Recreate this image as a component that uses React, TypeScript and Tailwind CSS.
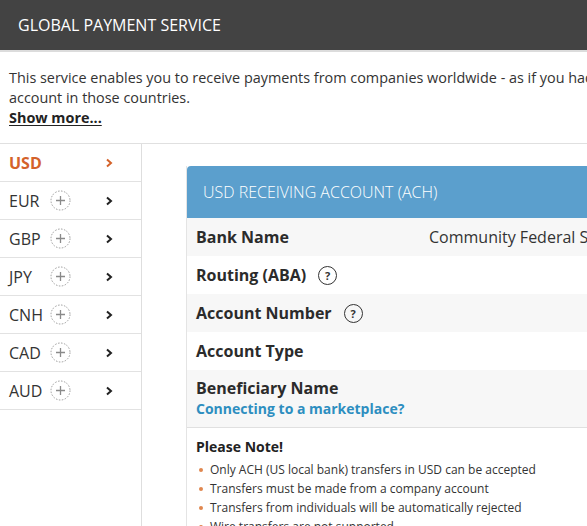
import React from 'react';

const currencies = [
    { code: 'USD', active: true },
    { code: 'EUR' },
    { code: 'GBP' },
    { code: 'JPY' },
    { code: 'CNH' },
    { code: 'CAD' },
    { code: 'AUD' },
];

function Chevron({ color }: { color: string }) {
    return (
        <svg width="8" height="10" viewBox="0 0 8 10" className="shrink-0">
            <path d="M2 1.5 L6 5 L2 8.5" fill="none" stroke={color} strokeWidth="2" />
        </svg>
    );
}

function PlusCircle() {
    return (
        <svg width="21" height="21" viewBox="0 0 21 21" className="shrink-0">
            <circle cx="10.5" cy="10.5" r="9.5" fill="none" stroke="#9a9a9a" strokeWidth="1" strokeDasharray="1.5 1.5" />
            <path d="M10.5 6 V15 M6 10.5 H15" stroke="#8a8a8a" strokeWidth="1.3" />
        </svg>
    );
}

function Help() {
    return (
        <span className="ml-3 inline-flex h-[19px] w-[19px] items-center justify-center rounded-full border-[1.5px] border-[#333] text-[11px] font-bold leading-none text-[#333]">
            ?
        </span>
    );
}

const rows = [
    { label: 'Bank Name', value: 'Community Federal Savings Bank', shade: true },
    { label: 'Routing (ABA)', help: true },
    { label: 'Account Number', help: true, shade: true },
    { label: 'Account Type' },
];

const notes = [
    'Only ACH (US local bank) transfers in USD can be accepted',
    'Transfers must be made from a company account',
    'Transfers from individuals will be automatically rejected',
    'Wire transfers are not supported',
];

export default function App() {
    return (
        <div className="h-[526px] w-[587px] overflow-hidden bg-white text-[#333]" style={{ fontFamily: '"Open Sans", sans-serif' }}>
            <div className="w-[760px]">
                {/* header */}
                <div className="flex h-[52px] items-center border-b-2 border-[#dcdcdc] bg-[#434343] pl-[18px] text-[16px] text-white">
                    GLOBAL PAYMENT SERVICE
                </div>

                {/* intro */}
                <div className="px-[9px] pt-[16px] pb-[15px] text-[14.4px] leading-[20px] text-[#333]">
                    <p>
                        This service enables you to receive payments from companies worldwide - as if you had a bank
                        <br />
                        account in those countries.
                    </p>
                    <a className="font-bold text-[#222] underline underline-offset-2">Show more...</a>
                </div>

                <div className="flex border-t border-[#e0e0e0]">
                    {/* sidebar */}
                    <div className="h-[400px] w-[142px] shrink-0 border-r border-[#dedede]">
                        {currencies.map((c) => (
                            <div key={c.code} className="flex h-[38px] items-center border-b border-[#e2e2e2] pl-[9px] pr-[28px]">
                                <span
                                    className={
                                        c.active
                                            ? 'w-[44px] text-[16px] font-bold text-[#d4622a]'
                                            : 'w-[41px] text-[16px] text-[#333]'
                                    }
                                >
                                    {c.code}
                                </span>
                                {!c.active && <PlusCircle />}
                                <span className="flex-1" />
                                <Chevron color={c.active ? '#d4622a' : '#222'} />
                            </div>
                        ))}
                    </div>

                    {/* content */}
                    <div className="flex-1 pl-[44px] pt-[22px]">
                        <div className="w-[560px] border-l border-[#e4e4e4]">
                            <div className="flex h-[52px] items-center rounded-tl-[4px] bg-[#5b9fcd] pl-[16px] text-[16px] font-light text-white">
                                USD RECEIVING ACCOUNT (ACH)
                            </div>
                            {rows.map((r) => (
                                <div
                                    key={r.label}
                                    className={`flex h-[38px] items-center pl-[9px] ${r.shade ? 'bg-[#f7f7f7]' : 'bg-white'}`}
                                >
                                    <div className="flex w-[233px] items-center text-[16px] font-bold text-[#2b2b2b]">
                                        {r.label}
                                        {r.help && <Help />}
                                    </div>
                                    <div className="whitespace-nowrap text-[16px] text-[#333]">{r.value}</div>
                                </div>
                            ))}
                            <div className="h-[58px] border-b border-[#e0e0e0] bg-[#f7f7f7] pl-[9px] pt-[7px]">
                                <div className="text-[16px] font-bold leading-[22px] text-[#2b2b2b]">Beneficiary Name</div>
                                <div className="text-[14px] font-bold leading-[20px] text-[#2d8ec0]">Connecting to a marketplace?</div>
                            </div>

                            <div className="pl-[9px] pt-[9px]">
                                <div className="text-[14px] font-bold leading-[20px] text-[#222]">Please Note!</div>
                                <ul className="mt-[3px]">
                                    {notes.map((n) => (
                                        <li key={n} className="flex h-[19px] items-center text-[12px] text-[#333]">
                                            <span className="mr-[7px] ml-[3px] inline-block h-[4px] w-[4px] rounded-full bg-[#e0874f]" />
                                            {n}
                                        </li>
                                    ))}
                                </ul>
                            </div>
                        </div>
                    </div>
                </div>
            </div>
        </div>
    );
}
